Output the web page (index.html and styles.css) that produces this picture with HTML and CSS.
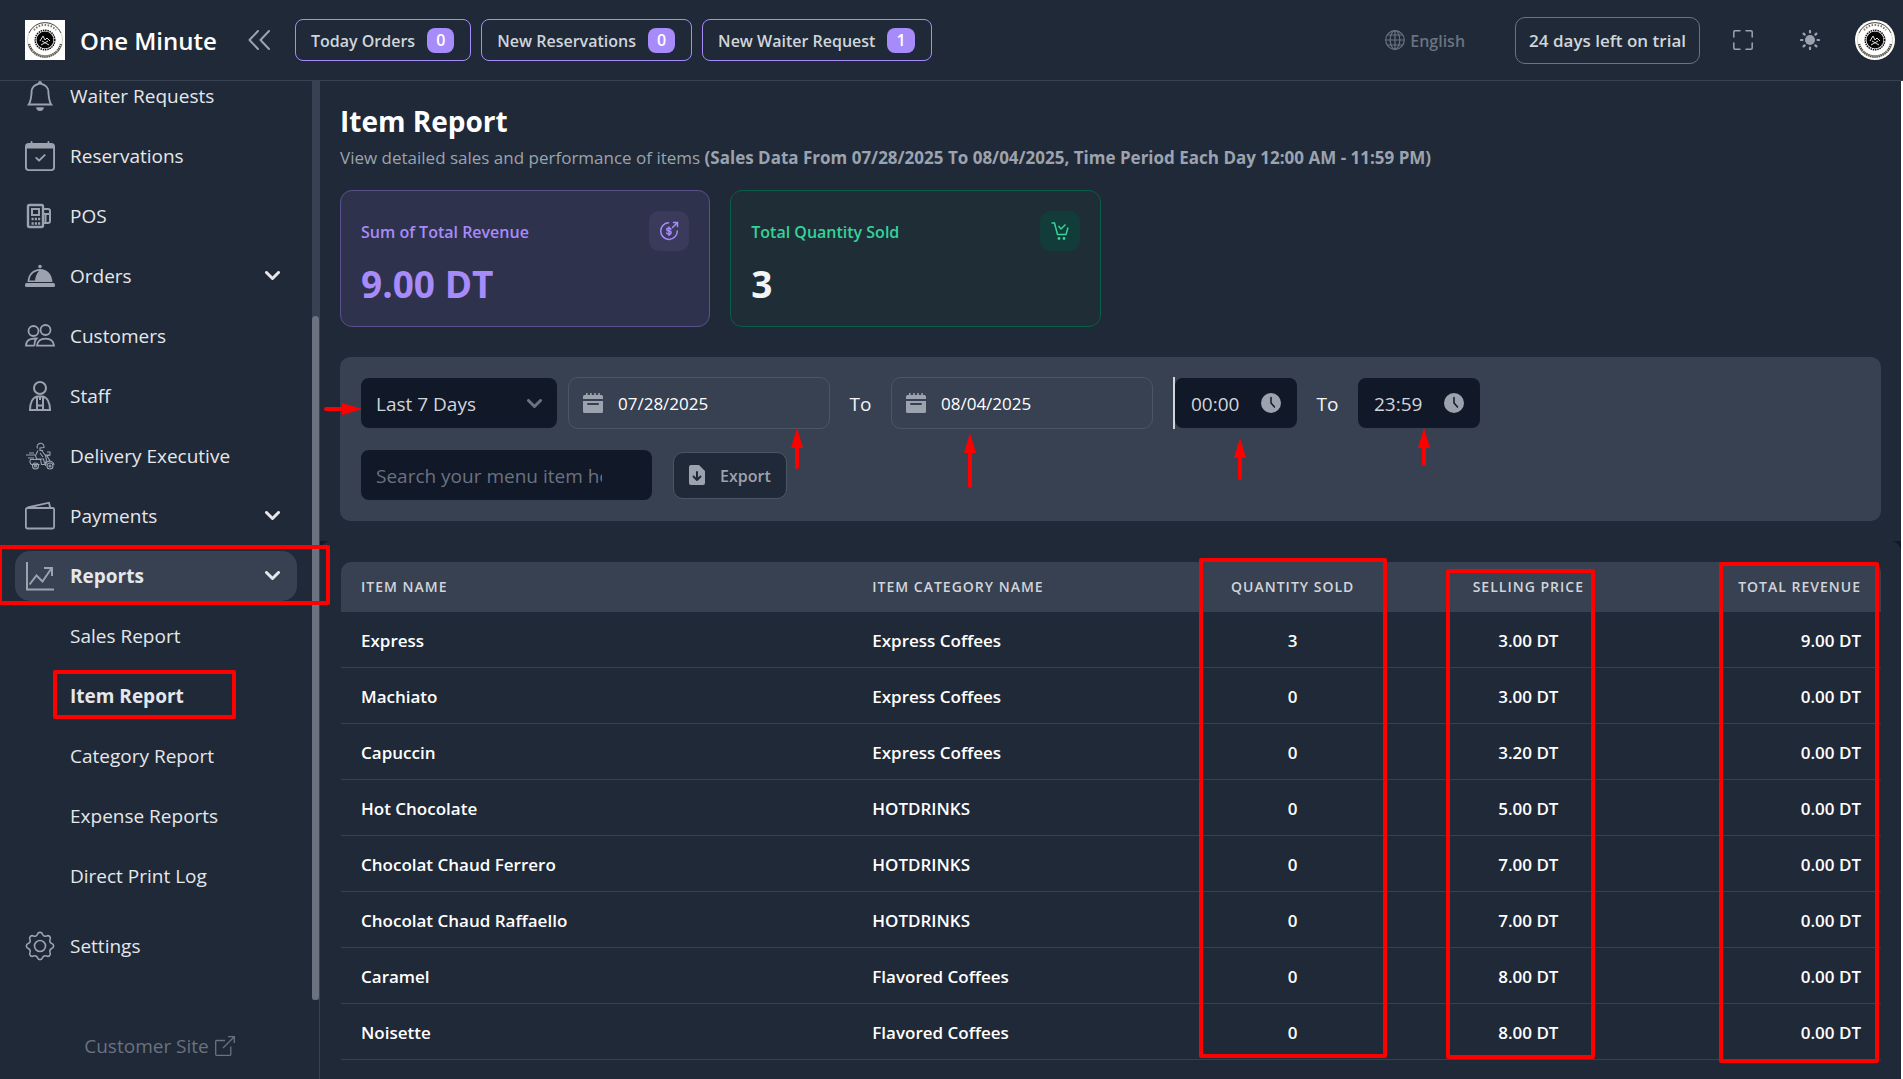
FILE: index.html
```html
<!DOCTYPE html>
<html lang="en">
<head>
<meta charset="utf-8">
<title>Item Report</title>
<link rel="stylesheet" href="styles.css">
</head>
<body>
<svg class="defs" width="0" height="0" aria-hidden="true">
  <symbol id="logo" viewBox="0 0 40 40">
    <rect width="40" height="40" fill="#fff"/>
    <g fill="none">
      <circle cx="20" cy="20" r="17.5" stroke="#d9d6c3" stroke-width="1"/>
      <path d="M4 13A17.500 17.500 0 0 1 36 13" stroke="#55534a" stroke-width="1"/>
      <path d="M9 10A14.500 14.500 0 0 1 31 10" stroke="#77756c" stroke-width="2" stroke-dasharray="1.500 1.500"/>
      <path d="M4 24A16.500 16.500 0 0 0 36 24" stroke="#55534a" stroke-width="2.500" stroke-dasharray="1.500 .6"/>
      <path d="M6 29A17.500 17.500 0 0 0 34 29" stroke="#8a8878" stroke-width="1"/>
      <circle cx="20" cy="20" r="9.800" stroke="#111" stroke-width="1.500" stroke-dasharray="1.500 .8"/>
    </g>
    <circle cx="20" cy="20" r="8.500" fill="#050505"/>
    <path d="M15 21l3-5 2 4 2-2 3 3M16 25l7-4M17 21l7 4" fill="none" stroke="#ddd" stroke-width="1"/>
  </symbol>
  <symbol id="chev" viewBox="0 0 15 10"><path d="M1.500 1.500L7.500 7.500L13.500 1.500" fill="none" stroke="currentColor" stroke-width="3" stroke-linecap="round" stroke-linejoin="round"/></symbol>
  <symbol id="cal" viewBox="0 0 20 20"><path fill="currentColor" d="M1.500 2H3V.5a.8.8 0 0 1 1.600 0V2h2.500V.5a.8.8 0 0 1 1.600 0V2h2.500V.5a.8.8 0 0 1 1.600 0V2h2.500V.5a.8.8 0 0 1 1.600 0V2h1.600A1.500 1.500 0 0 1 20 3.500V6H0V3.500A1.500 1.500 0 0 1 1.500 2zM0 8h20v10.500a1.500 1.500 0 0 1-1.500 1.500h-17A1.500 1.500 0 0 1 0 18.500zM5 10a1 1 0 0 0 0 2h10a1 1 0 0 0 0-2z" fill-rule="evenodd"/></symbol>
  <symbol id="clock" viewBox="0 0 20 20"><circle cx="10" cy="10" r="10" fill="currentColor"/><path d="M10 4.500V10l3.500 4" fill="none" stroke="#111827" stroke-width="1.500" stroke-linecap="round"/></symbol>
</svg>

<header class="topbar">
  <a class="brand" href="#"><svg class="logo"><use href="#logo"/></svg><span>One Minute</span></a>
  <button class="icon-btn collapse" aria-label="Collapse sidebar"><svg width="22" height="20" viewBox="0 0 22 20" fill="none" stroke="currentColor" stroke-width="2" stroke-linecap="round" stroke-linejoin="round"><path d="M10 1L1.500 10L10 19M21 1L12.500 10L21 19"/></svg></button>
  <nav class="alerts" aria-label="Activity">
    <a href="#"><span>Today Orders</span> <b>0</b></a>
    <a href="#"><span>New Reservations</span> <b>0</b></a>
    <a href="#"><span>New Waiter Request</span> <b>1</b></a>
  </nav>
  <div class="tools">
    <button class="icon-btn lang"><svg width="20" height="20" viewBox="0 0 20 20" fill="none" stroke="currentColor" stroke-width="1.200"><circle cx="10" cy="10" r="9.300"/><ellipse cx="10" cy="10" rx="4.800" ry="9.300"/><path d="M10 .7v18.600M.7 10h18.600M2.500 5h15M2.500 15h15"/></svg><span>English</span></button>
    <a class="trial" href="#"><span>24 days left on trial</span></a>
    <button class="icon-btn" aria-label="Full screen"><svg width="20" height="20" viewBox="0 0 20 20" fill="none" stroke="currentColor" stroke-width="1.500" stroke-linecap="round" stroke-linejoin="round"><path d="M.8 7V2Q.8.8 2 .8H7M13 .8h5Q19.200.8 19.200 2V7M19.200 13v5q0 1.200-1.200 1.200H13M7 19.200H2Q.8 19.200.8 18V13"/></svg></button>
    <button class="icon-btn" aria-label="Light theme"><svg width="20" height="20" viewBox="0 0 20 20"><circle cx="10" cy="10" r="5" fill="currentColor"/><path d="M10 1v1.500M10 17.500V19M1 10h1.500M17.500 10H19M3.600 3.600l1 1M15.400 15.400l1 1M3.600 16.400l1-1M15.400 4.600l1-1" stroke="currentColor" stroke-width="2.200" stroke-linecap="round"/></svg></button>
    <button class="icon-btn" aria-label="Account"><svg class="avatar"><use href="#logo"/></svg></button>
  </div>
</header>

<div class="layout">
  <aside class="sidebar">
    <div class="scroller">
      <nav class="menu" aria-label="Main">
        <a href="#"><svg viewBox="0 0 16 16" fill="currentColor"><path d="M8 16a2 2 0 0 0 2-2H6a2 2 0 0 0 2 2M8 1.918l-.797.161A4 4 0 0 0 4 6c0 .628-.134 2.197-.459 3.742-.16.767-.376 1.566-.663 2.258h10.244c-.287-.692-.502-1.490-.663-2.258C12.134 8.197 12 6.628 12 6a4 4 0 0 0-3.203-3.920zM14.220 12c.223.447.481.801.78 1H1c.299-.199.557-.553.78-1C2.680 10.200 3 6.880 3 6c0-2.420 1.720-4.440 4.005-4.901a1 1 0 1 1 1.990 0A5 5 0 0 1 13 6c0 .88.32 4.200 1.220 6"/></svg><span>Waiter Requests</span></a>
        <a href="#"><svg viewBox="0 0 16 16" fill="currentColor"><path d="M10.854 7.146a.5.5 0 0 1 0 .708l-3 3a.5.5 0 0 1-.708 0l-1.500-1.500a.5.5 0 1 1 .708-.708L7.500 9.793l2.646-2.647a.5.5 0 0 1 .708 0"/><path d="M3.500 0a.5.5 0 0 1 .5.5V1h8V.5a.5.5 0 0 1 1 0V1h1a2 2 0 0 1 2 2v11a2 2 0 0 1-2 2H2a2 2 0 0 1-2-2V3a2 2 0 0 1 2-2h1V.5a.5.5 0 0 1 .5-.5M1 4v10a1 1 0 0 0 1 1h12a1 1 0 0 0 1-1V4z"/></svg><span>Reservations</span></a>
        <a href="#"><svg viewBox="0 0 30 30" fill="none" stroke="currentColor" stroke-width="2"><rect x="3" y="4" width="15" height="22" rx="1.500" stroke-width="2.400"/><rect x="7" y="8" width="7" height="6"/><path d="M6.500 18h2.200M9.800 18h2.200M13 18h2.200M6.500 22.500h2.200M9.800 22.500h2.200M13 22.500h2.200" stroke-width="2.400"/><path d="M18 8h5a2 2 0 0 1 2 2v10a2 2 0 0 1-2 2h-5M18 13h7M20.500 13v9"/></svg><span>POS</span></a>
        <a href="#"><svg viewBox="0 0 30 30"><g fill="currentColor"><rect x="0" y="22" width="30" height="4" rx="1.500"/><circle cx="15" cy="5.500" r="1.800"/><path fill-rule="evenodd" d="M2.500 21C3 13 8 8 15 8s12 5 12.500 13zM4.500 19.500h5.500c.4-4 1.700-7 4-9.600C8.500 10.500 5 14 4.500 19.500z"/></g></svg><span>Orders</span><svg class="chev"><use href="#chev"/></svg></a>
        <a href="#"><svg viewBox="0 0 30 30" fill="none" stroke="currentColor" stroke-width="1.800"><circle cx="8.500" cy="10" r="5"/><circle cx="20.500" cy="9" r="5"/><path d="M9.500 24.700H1c0-5 3.500-7.500 10.500-7.200-2 2-2 4.500-2 7.200M12 24.700c.5-4.500 3.500-7 8.500-7s8 2.500 8.500 7z"/></svg><span>Customers</span></a>
        <a href="#"><svg viewBox="0 0 30 30" fill="none" stroke="currentColor" stroke-width="2"><circle cx="15" cy="7" r="6"/><path d="M5 29c0-7.500 3-12.500 7-13.500h6c4 1 7 6 7 13.500zM12 16v13M18 16v13M12 24.500h6M15 16v3"/></svg><span>Staff</span></a>
        <a href="#"><svg viewBox="0 0 30 30" fill="none" stroke="currentColor" stroke-width="1.100"><path d="M12.500 7.500a3.500 3.500 0 1 1 6.500-1l-4 .5v2.500h3M13 9.500l-2.500 5 1 3.500h7l1 4M17 10l3 4h4M15 12l3 4M1 14h9M3 17h6M4 12h5M5.500 18.500h10l1 5h3l2-4-1-5M5.500 18.500q-1.500 3 1 5h8M22 11h3v3l-3 1 3 5M20.500 25q0-4.500 4-5 4 .5 4.500 4"/><circle cx="10.500" cy="25" r="3"/><circle cx="10.500" cy="25" r="1"/><circle cx="25" cy="25" r="3"/><circle cx="25" cy="25" r="1"/></svg><span>Delivery Executive</span></a>
        <a href="#"><svg viewBox="0 0 30 30" fill="none" stroke="currentColor" stroke-width="1.800"><rect x=".9" y="7" width="28.200" height="20.500" rx="1.500"/><path d="M2.500 6.500L24 1.700l1.200 5"/></svg><span>Payments</span><svg class="chev"><use href="#chev"/></svg></a>
        <a href="#" class="active"><svg viewBox="0 0 30 30" fill="none" stroke="currentColor" stroke-width="2"><path d="M2 1v27.500h27M4.500 23.500l7-9 6 6 8.500-12.500M19 7h8v8"/></svg><span>Reports</span><svg class="chev"><use href="#chev"/></svg></a>
        <a href="#" class="sub">Sales Report</a>
        <a href="#" class="sub current" aria-current="page">Item Report</a>
        <a href="#" class="sub">Category Report</a>
        <a href="#" class="sub">Expense Reports</a>
        <a href="#" class="sub">Direct Print Log</a>
        <a href="#" class="settings"><svg viewBox="0 0 30 30" fill="none" stroke="currentColor" stroke-width="1.600"><circle cx="15" cy="15" r="5.500"/><path d="M26.740 12.500A2.600 2.600 0 0 1 26.740 17.500A3 3 0 0 0 25.060 21.540A2.600 2.600 0 0 1 21.540 25.060A3 3 0 0 0 17.500 26.740A2.600 2.600 0 0 1 12.500 26.740A3 3 0 0 0 8.460 25.060A2.600 2.600 0 0 1 4.940 21.540A3 3 0 0 0 3.260 17.500A2.600 2.600 0 0 1 3.260 12.500A3 3 0 0 0 4.940 8.460A2.600 2.600 0 0 1 8.460 4.940A3 3 0 0 0 12.500 3.260A2.600 2.600 0 0 1 17.500 3.260A3 3 0 0 0 21.540 4.940A2.600 2.600 0 0 1 25.060 8.460A3 3 0 0 0 26.740 12.500z"/></svg><span>Settings</span></a>
      </nav>
      <div class="track"><div class="thumb"></div></div>
    </div>
    <a class="site" href="#">Customer Site<svg width="20" height="20" viewBox="0 0 20 20" fill="none" stroke="currentColor" stroke-width="1.300"><path d="M10 4.500H1.500Q.7 4.500.7 5.300V18.500q0 .8.800.8H15q.8 0 .8-.8V10.500M13 .7h6.300V7M19 1L8 12"/></svg></a>
  </aside>

  <main class="main">
    <section class="panel overview">
      <h1>Item Report</h1>
      <p class="lead">View detailed sales and performance of items <strong>(Sales Data From 07/28/2025 To 08/04/2025, Time Period Each Day 12:00 AM - 11:59 PM)</strong></p>
      <div class="cards">
        <article class="card revenue">
          <h2>Sum of Total Revenue</h2>
          <span class="chip"><svg width="20" height="20" viewBox="0 0 20 20" fill="none" stroke="currentColor" stroke-width="1.500" stroke-linecap="round"><path d="M9.500 1.800A8.300 8.300 0 1 0 18.300 10M13.500 6.500L18 2M14.500 1.500h4v4M12 8.300Q11.500 7 9.800 7 7.800 7 7.800 8.500T9.900 10t2.200 1.600T10 13.200Q8.300 13.200 7.700 12M10 6v8.500"/></svg></span>
          <p>9.00 DT</p>
        </article>
        <article class="card quantity">
          <h2>Total Quantity Sold</h2>
          <span class="chip"><svg width="20" height="20" viewBox="0 0 20 20" fill="none" stroke="currentColor" stroke-width="1.500"><path d="M1.500 2h3l3 11.500h8.500L18 6.500M8.500 5l2.500 3 4.500-4.500"/><g fill="currentColor" stroke="none"><circle cx="9" cy="17.500" r="1.400"/><circle cx="14" cy="17.500" r="1.400"/></g></svg></span>
          <p>3</p>
        </article>
      </div>
      <form class="filters">
        <div class="row">
          <div class="select"><select aria-label="Period"><option>Last 7 Days</option></select><svg class="chev"><use href="#chev"/></svg></div>
          <label class="date"><svg><use href="#cal"/></svg><input type="text" value="07/28/2025" aria-label="Start date"></label>
          <span class="to">To</span>
          <label class="date"><svg><use href="#cal"/></svg><input type="text" value="08/04/2025" aria-label="End date"></label>
          <div class="divided"><label class="time"><input type="text" value="00:00" aria-label="Start time"><svg><use href="#clock"/></svg></label></div>
          <span class="to">To</span>
          <label class="time"><input type="text" value="23:59" aria-label="End time"><svg><use href="#clock"/></svg></label>
        </div>
        <div class="row second">
          <input class="search" type="text" placeholder="Search your menu item here" aria-label="Search menu items">
          <button type="button" class="export"><svg width="16" height="20" viewBox="0 0 16 20"><path fill="currentColor" d="M2 0h8l6 6v12a2 2 0 0 1-2 2H2a2 2 0 0 1-2-2V2a2 2 0 0 1 2-2z"/><path d="M8 7v8M4.500 11.500L8 15l3.500-3.500" fill="none" stroke="#1f2937" stroke-width="2" stroke-linecap="round" stroke-linejoin="round"/></svg><span>Export</span></button>
        </div>
      </form>
    </section>
    <section class="panel report">
      <table>
        <thead><tr><th class="c1">Item Name</th><th class="c2">Item Category Name</th><th class="c3">Quantity Sold</th><th class="c4">Selling Price</th><th class="c5">Total Revenue</th></tr></thead>
        <tbody>
          <tr><td>Express</td><td>Express Coffees</td><td>3</td><td>3.00 DT</td><td>9.00 DT</td></tr>
          <tr><td>Machiato</td><td>Express Coffees</td><td>0</td><td>3.00 DT</td><td>0.00 DT</td></tr>
          <tr><td>Capuccin</td><td>Express Coffees</td><td>0</td><td>3.20 DT</td><td>0.00 DT</td></tr>
          <tr><td>Hot Chocolate</td><td>HOTDRINKS</td><td>0</td><td>5.00 DT</td><td>0.00 DT</td></tr>
          <tr><td>Chocolat Chaud Ferrero</td><td>HOTDRINKS</td><td>0</td><td>7.00 DT</td><td>0.00 DT</td></tr>
          <tr><td>Chocolat Chaud Raffaello</td><td>HOTDRINKS</td><td>0</td><td>7.00 DT</td><td>0.00 DT</td></tr>
          <tr><td>Caramel</td><td>Flavored Coffees</td><td>0</td><td>8.00 DT</td><td>0.00 DT</td></tr>
          <tr><td>Noisette</td><td>Flavored Coffees</td><td>0</td><td>8.00 DT</td><td>0.00 DT</td></tr>
        </tbody>
      </table>
    </section>
  </main>
</div>

<svg class="marks" width="1903" height="1079" viewBox="0 0 1903 1079" aria-hidden="true">
  <g fill="none" stroke="#f00" stroke-width="4" stroke-linejoin="round">
    <rect x="0" y="547" width="328" height="56"/>
    <rect x="55" y="672" width="179" height="45"/>
    <rect x="1201" y="560" width="184" height="496"/>
    <rect x="1448" y="571" width="145" height="486"/>
    <rect x="1721" y="564" width="156" height="497"/>
  </g>
  <g stroke="#f00" stroke-width="4" stroke-linecap="round">
    <path d="M326 409H345M797 467V445M970 486V450M1240 478V455M1424 464V445"/>
  </g>
  <path fill="#f00" d="M362 409l-20-6v12zM797 428l-6 20h12zM970 433l-6 20h12zM1240 438l-6 20h12zM1424 428l-6 20h12z"/>
</svg>
</body>
</html>
```

FILE: styles.css
```css
* { box-sizing: border-box; }
html { background: #fff; }
body {
  margin: 0;
  height: 100vh;
  display: flex;
  flex-direction: column;
  overflow: hidden;
  position: relative;
  font: 400 17px/24px "Open Sans", "Noto Sans", sans-serif;
  color: #fff;
}
a { color: inherit; text-decoration: none; }
h1, h2, p { margin: 0; }
input, select, button { font: inherit; color: inherit; }
svg { flex: none; display: block; }
.defs { position: absolute; }

.topbar {
  flex: none;
  height: 81px;
  padding: 0 8px 0 25px;
  display: flex;
  align-items: center;
  background: #1f2937;
  border-bottom: 1px solid #374151;
}
.topbar span { padding-top: 2px; }
.brand { display: flex; align-items: center; gap: 15px; width: 223px; font-size: 24px; font-weight: 600; }
.logo, .avatar { width: 40px; height: 40px; }
.avatar { border-radius: 50%; }
.icon-btn { border: 0; background: none; padding: 0; color: #9ca3af; display: flex; align-items: center; gap: 5px; }
.collapse { width: 47px; }
.alerts { display: flex; gap: 10px; }
.alerts a {
  height: 42px;
  padding: 0 16px 0 15px;
  display: flex;
  align-items: center;
  gap: 12px;
  border: 1px solid #a78bfa;
  border-radius: 8px;
  color: #d1d5db;
  font-size: 16px;
  font-weight: 600;
}
.alerts b { background: #a78bfa; color: #fff; border-radius: 8px; padding: 0 9px; line-height: 25px; font-weight: 600; }
.tools { margin-left: auto; display: flex; align-items: center; }
.lang { color: #6b7280; margin-right: 50px; font-size: 16px; font-weight: 600; }
.trial {
  height: 47px;
  padding: 0 13px;
  margin-right: 33px;
  display: flex;
  align-items: center;
  border: 1px solid #6b7280;
  border-radius: 10px;
  color: #d1d5db;
  font-weight: 600;
}
.tools .icon-btn + .icon-btn { margin-left: 47px; }
.tools .icon-btn:last-child { margin-left: 35px; }

.layout { flex: 1; min-height: 0; display: flex; margin-right: 2px; background: #111827; }
.sidebar { flex: none; width: 320px; background: #1f2937; border-right: 1px solid #374151; display: flex; flex-direction: column; }
.scroller { flex: 1; min-height: 0; display: flex; margin-right: -1px; overflow: hidden; }
.menu { flex: 1; margin-top: -10px; padding: 0 15px; display: flex; flex-direction: column; gap: 10px; font-size: 19px; color: #e5e7eb; }
.menu a { flex: none; height: 50px; padding: 0 17px 0 10px; display: flex; align-items: center; gap: 15px; border-radius: 15px; }
.menu a > svg { width: 30px; height: 30px; color: #9ca3af; }
.menu a > .chev { width: 15px; height: 10px; margin-left: auto; color: #e5e7eb; }
.menu .active { background: #374151; font-weight: 700; }
.menu .sub { padding-left: 55px; }
.menu .current { font-weight: 700; }
.menu .settings { margin-top: 10px; }
.track { width: 8px; background: #374151; padding-top: 235px; display: flex; }
.thumb { width: 7px; background: #6b7280; border-radius: 4px; }
.site { height: 79px; padding-top: 12px; display: flex; align-items: center; justify-content: center; gap: 6px; color: #6b7280; font-size: 19px; }

.main { flex: 1; min-width: 0; display: flex; flex-direction: column; }
.panel { background: #1f2937; padding: 20px; }
.report { flex: 1; padding-top: 21px; padding-left: 21px; border-radius: 10px 10px 0 0; }
h1 { font-size: 28px; line-height: 40px; font-weight: 700; }
.lead { line-height: 34px; color: #9ca3af; }
.lead strong { font-weight: 700; }
.cards { margin-top: 15px; display: grid; grid-template-columns: repeat(4, 1fr); gap: 20px; }
.card { height: 137px; padding: 20px; display: grid; grid-template-columns: 1fr auto; row-gap: 10px; align-content: start; align-items: center; border: 1px solid; border-radius: 12px; }
.card h2 { padding-top: 2px; font-size: 16px; line-height: 24px; font-weight: 600; }
.card p { font-size: 37px; line-height: 46px; font-weight: 700; }
.chip { width: 40px; height: 40px; display: grid; place-items: center; border-radius: 10px; }
.revenue { background: #2f324c; border-color: #5b508c; color: #a78bfa; }
.revenue .chip { background: #3a3a5a; }
.quantity { background: #1f2d37; border-color: #065f46; color: #34d399; }
.quantity .chip { background: #123c3a; }
.quantity p { color: #f3f4f6; }

.filters { margin-top: 30px; padding: 20px 21px; background: #374151; border-radius: 10px; display: grid; gap: 20px; font-size: 19px; }
.row { display: flex; align-items: center; height: 52px; }
.select { position: relative; width: 196px; height: 50px; margin-right: 11px; }
.select select { appearance: none; width: 100%; height: 100%; border: 0; border-radius: 8px; background: #111827; color: #d1d5db; padding: 2px 15px 0; }
.select .chev { position: absolute; right: 15px; top: 21px; width: 15px; height: 10px; color: #6b7280; }
.date { width: 262px; height: 52px; padding: 0 14px; display: flex; align-items: center; gap: 15px; border: 1px solid #4b5563; border-radius: 10px; color: #9ca3af; }
.date svg, .time svg { width: 20px; height: 20px; }
.date input { width: 100%; min-width: 0; padding: 2px 0 0; border: 0; background: none; color: #fff; font-size: 17px; }
.to { width: 61px; padding-top: 2px; text-align: center; color: #f3f4f6; }
.divided { border-left: 2px solid #d1d5db; margin-left: 20px; height: 52px; display: flex; align-items: center; }
.time { width: 122px; height: 50px; padding: 0 16px; display: flex; align-items: center; justify-content: space-between; background: #111827; border-radius: 8px; color: #9ca3af; }
.time input { width: 60px; padding: 2px 0 0; border: 0; background: none; color: #d1d5db; }
.second { gap: 21px; }
.search { width: 291px; height: 50px; padding: 2px 50px 0 15px; border: 0; border-radius: 8px; background: #111827; }
.search::placeholder { color: #6b7280; opacity: 1; }
.export { height: 47px; padding: 0 15px; display: flex; align-items: center; gap: 15px; border: 1px solid #4b5563; border-radius: 10px; background: #1f2937; color: #9ca3af; font-size: 16px; font-weight: 600; }
.export span { padding-top: 2px; }

table { width: 100%; border-collapse: separate; border-spacing: 0; table-layout: fixed; }
th { height: 50px; padding: 0 20px; background: #374151; color: #d1d5db; font-size: 14px; font-weight: 600; text-transform: uppercase; letter-spacing: 1px; text-align: left; }
th:first-child { border-top-left-radius: 10px; }
th:last-child { border-top-right-radius: 10px; }
td { height: 56px; padding: 2px 20px 0; border-bottom: 1px solid #374151; font-size: 17px; font-weight: 600; }
.c1 { width: 33.2%; }
.c2 { width: 20.8%; }
.c3 { width: 15.6%; }
.c4 { width: 15%; }
th:nth-child(3), th:nth-child(4), td:nth-child(3), td:nth-child(4) { text-align: center; }
th:last-child, td:last-child { text-align: right; }

.marks { position: absolute; left: 0; top: 0; pointer-events: none; }
```
